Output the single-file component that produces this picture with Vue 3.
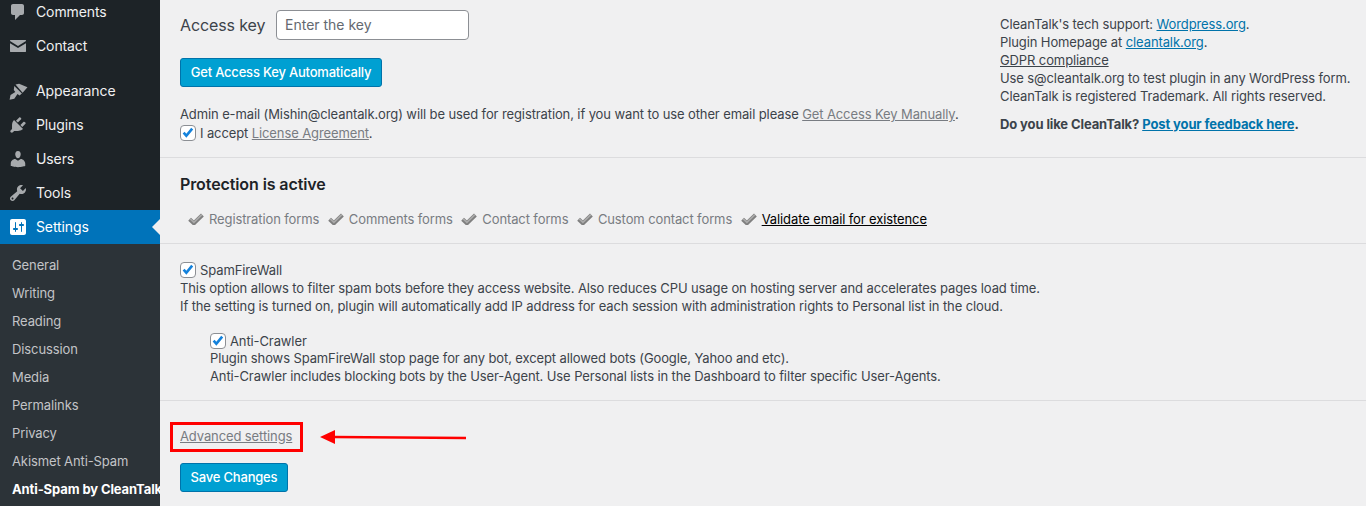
<script setup>
const menuTop = [
  { label: 'Comments', d: 'M5 2h9c1.1 0 2 .9 2 2v7c0 1.1-.9 2-2 2h-2l-5 5v-5H5c-1.1 0-2-.9-2-2V4c0-1.1.9-2 2-2z' },
  { label: 'Contact', d: 'M2.5 4h15c.3 0 .5.2.5.5v.6l-8 4.9-8-4.9v-.6c0-.3.2-.5.5-.5zM2 7.2l8 4.9 8-4.9v8.3c0 .3-.2.5-.5.5h-15c-.3 0-.5-.2-.5-.5z' }
]
const menuMain = [
  { label: 'Appearance', d: 'M7.5 3.6l3.6-.9 8.4 3.6-4.9 5.4zM6.3 4.9l7.6 7.5-2.4 2.1-2-1.5-3.2 4.8-4.7 1 .9-4.7 4.8-3.2-1.5-2z' },
  { label: 'Plugins', d: 'M13.11 4.36L9.87 7.6 8 5.73l3.24-3.24c.35-.34 1.05-.2 1.56.32.52.51.66 1.21.31 1.55zm-8 1.77l.91-1.12 9.01 9.01-1.19.84c-.71.71-2.63 1.16-3.82 1.16H6.14L4.9 17.26c-.59.59-1.54.59-2.12 0-.59-.58-.59-1.53 0-2.12l1.24-1.24v-3.88c0-1.13.4-3.19 1.09-3.89zm7.26 3.97l3.24-3.24c.34-.35 1.04-.21 1.55.31.52.51.66 1.21.31 1.55l-3.24 3.25z' },
  { label: 'Users', d: 'M10 9.25c-2.27 0-2.73-3.44-2.73-3.44C7 4.02 7.82 2 9.97 2c2.16 0 2.98 2.02 2.71 3.81 0 0-.41 3.44-2.68 3.44zm0 2.57L12.72 10c2.39 0 4.52 2.33 4.52 4.53v2.49s-3.65 1.13-7.24 1.13c-3.65 0-7.24-1.13-7.24-1.13v-2.49c0-2.25 1.94-4.48 4.47-4.48z' },
  { label: 'Tools', d: 'M16.68 9.77c-1.34 1.34-3.3 1.67-4.95.99l-5.41 6.52c-.99.99-2.59.99-3.58 0s-.99-2.59 0-3.57l6.52-5.42c-.68-1.65-.35-3.61.99-4.95 1.28-1.28 3.12-1.62 4.72-1.06l-2.89 2.89 2.82 2.82 2.86-2.87c.53 1.58.18 3.39-1.08 4.65zM3.81 16.21c.4.39 1.04.39 1.43 0 .4-.4.4-1.04 0-1.43-.39-.4-1.03-.4-1.43 0-.39.39-.39 1.03 0 1.43z' }
]
const settingsIcon = 'M18 16V4c0-1.1-.9-2-2-2H4c-1.1 0-2 .9-2 2v12c0 1.1.9 2 2 2h12c1.1 0 2-.9 2-2zM8 11h1c.55 0 1 .45 1 1s-.45 1-1 1H8v1.5c0 .28-.22.5-.5.5s-.5-.22-.5-.5V13H6c-.55 0-1-.45-1-1s.45-1 1-1h1V5.5c0-.28.22-.5.5-.5s.5.22.5.5V11zm5-2h-1c-.55 0-1-.45-1-1s.45-1 1-1h1V5.5c0-.28.22-.5.5-.5s.5.22.5.5V7h1c.55 0 1 .45 1 1s-.45 1-1 1h-1v5.5c0 .28-.22.5-.5.5s-.5-.22-.5-.5V9z'
const submenu = ['General', 'Writing', 'Reading', 'Discussion', 'Media', 'Permalinks', 'Privacy', 'Akismet Anti-Spam']
const statuses = ['Registration forms', 'Comments forms', 'Contact forms', 'Custom contact forms']
</script>

<template>
  <div class="page">
    <aside class="sidebar">
      <ul class="menu menu-clipped">
        <li v-for="m in menuTop" :key="m.label" class="item">
          <svg class="icon" viewBox="0 0 20 20"><path :d="m.d" /></svg>{{ m.label }}
        </li>
      </ul>
      <ul class="menu menu-main">
        <li v-for="m in menuMain" :key="m.label" class="item">
          <svg class="icon" viewBox="0 0 20 20"><path :d="m.d" /></svg>{{ m.label }}
        </li>
        <li class="item item-active">
          <svg class="icon" viewBox="0 0 20 20"><path :d="settingsIcon" /></svg>Settings
        </li>
      </ul>
      <ul class="submenu">
        <li v-for="s in submenu" :key="s">{{ s }}</li>
        <li class="sub-current">Anti-Spam by CleanTalk</li>
      </ul>
    </aside>

    <main class="main">
      <section class="top">
        <div class="key-col">
          <div class="key-row">
            <label class="key-label" for="key">Access key</label>
            <input id="key" class="key-input" type="text" placeholder="Enter the key" />
          </div>
          <button class="btn btn-auto" type="button">Get Access Key Automatically</button>
          <p class="admin">Admin e-mail (Mishin@cleantalk.org) will be used for registration, if you want to use other email please <a class="muted">Get Access Key Manually</a>.</p>
          <div class="accept">
            <span class="check"><svg viewBox="0 0 16 16"><path d="M3 7.6l3.1 3.6L12.8 3" /></svg></span>
            <span>I accept <a class="muted">License Agreement</a>.</span>
          </div>
        </div>
        <div class="info">
          <div>CleanTalk's tech support: <a class="link">Wordpress.org</a>.</div>
          <div>Plugin Homepage at <a class="link">cleantalk.org</a>.</div>
          <div><a class="plain">GDPR compliance</a></div>
          <div>Use s@cleantalk.org to test plugin in any WordPress form.</div>
          <div>CleanTalk is registered Trademark. All rights reserved.</div>
          <div class="feedback">Do you like CleanTalk? <a class="link">Post your feedback here</a>.</div>
        </div>
      </section>

      <section class="status">
        <h2>Protection is active</h2>
        <div class="status-row">
          <span v-for="s in statuses" :key="s" class="status-item">
            <svg class="tick" viewBox="0 0 16 12"><path class="tick-back" d="M1.6 6.2l4.3 4.1 8.5-8.3" /><path class="tick-front" d="M2 5.6l3.9 3.8 8-7.8" /></svg>{{ s }}
          </span>
          <span class="status-item status-strong">
            <svg class="tick" viewBox="0 0 16 12"><path class="tick-back" d="M1.6 6.2l4.3 4.1 8.5-8.3" /><path class="tick-front" d="M2 5.6l3.9 3.8 8-7.8" /></svg><a>Validate email for existence</a>
          </span>
        </div>
      </section>

      <section class="options">
        <div class="opt-head">
          <span class="check"><svg viewBox="0 0 16 16"><path d="M3 7.6l3.1 3.6L12.8 3" /></svg></span>
          <span>SpamFireWall</span>
        </div>
        <div>This option allows to filter spam bots before they access website. Also reduces CPU usage on hosting server and accelerates pages load time.</div>
        <div>If the setting is turned on, plugin will automatically add IP address for each session with administration rights to Personal list in the cloud.</div>
        <div class="nested">
          <div class="opt-head nested-head">
            <span class="check"><svg viewBox="0 0 16 16"><path d="M3 7.6l3.1 3.6L12.8 3" /></svg></span>
            <span>Anti-Crawler</span>
          </div>
          <div>Plugin shows SpamFireWall stop page for any bot, except allowed bots (Google, Yahoo and etc).</div>
          <div>Anti-Crawler includes blocking bots by the User-Agent. Use Personal lists in the Dashboard to filter specific User-Agents.</div>
        </div>
      </section>

      <section class="footer">
        <a class="muted advanced">Advanced settings</a>
        <button class="btn btn-save" type="button">Save Changes</button>
        <span class="red-box"></span>
        <svg class="red-arrow" viewBox="0 0 147 16"><path d="M146 8L14 7" stroke="#f00" stroke-width="2.4" fill="none" /><path d="M0 7l15-7v14z" fill="#f00" /></svg>
      </section>
    </main>
  </div>
</template>

<style>
html, body { margin: 0; height: 100%; overflow: hidden; background: #f0f0f1; }
</style>

<style scoped>
.page {
  display: flex;
  height: 506px;
  overflow: hidden;
  font-family: Inter, "Liberation Sans", sans-serif;
  font-size: 13px;
  letter-spacing: -0.11px;
  line-height: 18px;
  color: #3c434a;
  background: #f0f0f1;
}
ul { list-style: none; margin: 0; padding: 0; }
.sidebar { width: 160px; flex: none; background: #1d2327; overflow: hidden; font-size: 14px; }
.menu-clipped { margin-top: -5px; }
.menu-main { margin-top: 11px; }
.item { height: 34px; display: flex; align-items: center; color: #f0f0f1; padding-left: 8px; position: relative; white-space: nowrap; }
.icon { width: 20px; height: 20px; margin-right: 8px; fill: #a7aaad; flex: none; }
.item-active { background: #0073ba; color: #fff; }
.item-active .icon { fill: #fff; }
.item-active::after {
  content: "";
  position: absolute; right: 0; top: 9px;
  border: 8px solid transparent; border-right-color: #f0f0f1; border-left-width: 0;
}
.submenu { background: #2c3338; padding: 7px 0; height: 262px; font-size: 13px; color: #c3c4c7; }
.submenu li { height: 28px; line-height: 28px; padding-left: 12px; white-space: nowrap; }
.sub-current { color: #fff; font-weight: 700; }

.main { flex: 1; min-width: 0; }
.top { display: flex; height: 158px; box-sizing: border-box; padding-left: 20px; border-bottom: 1px solid #dcdcde; }
.key-col { width: 820px; flex: none; padding-top: 10px; }
.key-row { display: flex; align-items: center; height: 30px; }
.key-label { font-size: 16px; width: 96px; flex: none; }
.key-input {
  width: 193px; height: 30px; box-sizing: border-box; padding: 0 8px 2px;
  border: 1px solid #8c8f94; border-radius: 4px; background: #fff;
  font: 14px Inter, sans-serif; color: #3c434a;
}
.key-input::placeholder { color: #646970; opacity: 1; }
.btn {
  display: block; height: 29px; box-sizing: border-box; padding: 0 0 2px;
  background: #00a0d2; border: 1px solid #0073aa; border-radius: 3px;
  color: #fff; font: 500 13px Inter, sans-serif; letter-spacing: -0.2px;
}
.btn-auto { width: 202px; margin-top: 18px; }
.admin { margin: 18px 0 0; white-space: nowrap; }
.muted { color: #787c82; text-decoration: underline; }
.accept { display: flex; align-items: center; height: 20px; gap: 4px; margin-top: 0; }
.check {
  width: 16px; height: 16px; flex: none; box-sizing: border-box;
  border: 1px solid #8c8f94; border-radius: 4px; background: #fff; display: block; overflow: hidden;
}
.check svg { display: block; width: 14px; height: 14px; }
.check path { fill: none; stroke: #1482dc; stroke-width: 3; }
.info { padding-top: 15px; margin-left: 0; white-space: nowrap; }
.link { color: #0073aa; text-decoration: underline; }
.plain { color: #3c434a; text-decoration: underline; }
.feedback { margin-top: 10px; font-weight: 700; }

.status { height: 86px; box-sizing: border-box; margin-top: 0; padding-left: 20px; border-bottom: 1px solid #dcdcde; }
.status h2 { margin: 0; padding-top: 16px; font-size: 16px; line-height: 20px; font-weight: 600; color: #1d2327; letter-spacing: -0.1px; }
.status-row { display: flex; margin-top: 16px; padding-left: 8px; gap: 8.5px; color: #787c82; white-space: nowrap; }
.status-item { display: flex; align-items: center; }
.status-strong { color: #000; }
.status-strong a { text-decoration: underline; }
.tick { width: 16px; height: 12px; margin-right: 5px; flex: none; }
.tick-back { fill: none; stroke: #7f7f7f; stroke-width: 4; }
.tick-front { fill: none; stroke: #ababab; stroke-width: 1.6; }

.options { height: 157px; box-sizing: border-box; padding: 17px 0 0 20px; border-bottom: 1px solid #dcdcde; white-space: nowrap; }
.opt-head { display: flex; align-items: center; gap: 4px; height: 18px; }
.nested-head { height: 17px; }
.nested { margin-top: 17px; padding-left: 30px; }

.footer { position: relative; padding: 26px 0 0 20px; }
.advanced { display: block; }
.btn-save { width: 108px; margin-top: 18px; }
.red-box { position: absolute; left: 10px; top: 21px; width: 133px; height: 30px; box-sizing: border-box; border: 3px solid #f00; }
.red-arrow { position: absolute; left: 160px; top: 29px; width: 147px; height: 16px; }
</style>
